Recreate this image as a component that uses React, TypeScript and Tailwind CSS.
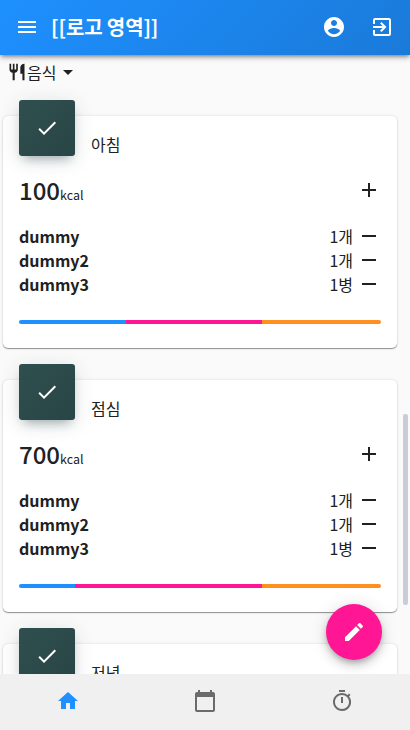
import React from "react";

const paths = {
  menu: "M3 18h18v-2H3v2zm0-5h18v-2H3v2zm0-7v2h18V6H3z",
  account:
    "M12 2C6.48 2 2 6.48 2 12s4.48 10 10 10 10-4.48 10-10S17.52 2 12 2zm0 3c1.66 0 3 1.34 3 3s-1.34 3-3 3-3-1.34-3-3 1.34-3 3-3zm0 14.2c-2.5 0-4.71-1.28-6-3.22.03-1.99 4-3.08 6-3.08 1.99 0 5.97 1.09 6 3.08-1.29 1.94-3.5 3.22-6 3.22z",
  exit: "M10.09 15.59L11.5 17l5-5-5-5-1.41 1.41L12.67 11H3v2h9.67l-2.58 2.59zM19 3H5c-1.11 0-2 .9-2 2v4h2V5h14v14H5v-4H3v4c0 1.1.89 2 2 2h14c1.1 0 2-.9 2-2V5c0-1.1-.9-2-2-2z",
  restaurant:
    "M11 9H9V2H7v7H5V2H3v7c0 2.12 1.66 3.84 3.75 3.97V22h2.5v-9.03C11.34 12.84 13 11.12 13 9V2h-2v7zm5-3v8h2.5v8H21V2c-2.76 0-5 2.24-5 4z",
  dropDown: "M7 10l5 5 5-5z",
  check: "M9 16.17L4.83 12l-1.42 1.41L9 19 21 7l-1.41-1.41z",
  add: "M19 13h-6v6h-2v-6H5v-2h6V5h2v6h6v2z",
  remove: "M19 13H5v-2h14v2z",
  home: "M10 20v-6h4v6h5v-8h3L12 3 2 12h3v8z",
  calendar:
    "M20 3h-1V1h-2v2H7V1H5v2H4c-1.1 0-2 .9-2 2v16c0 1.1.9 2 2 2h16c1.1 0 2-.9 2-2V5c0-1.1-.9-2-2-2zm0 18H4V8h16v13z",
  timer:
    "M15 1H9v2h6V1zm-4 13h2V8h-2v6zm8.03-6.61l1.42-1.42c-.43-.51-.9-.99-1.41-1.41l-1.42 1.42A8.962 8.962 0 0 0 12 4c-4.97 0-9 4.03-9 9s4.02 9 9 9a8.994 8.994 0 0 0 7.03-14.61zM12 20c-3.87 0-7-3.13-7-7s3.13-7 7-7 7 3.13 7 7-3.13 7-7 7z",
  edit: "M3 17.25V21h3.75L17.81 9.94l-3.75-3.75L3 17.25zM20.71 7.04c.39-.39.39-1.02 0-1.41l-2.34-2.34c-.39-.39-1.02-.39-1.41 0l-1.83 1.83 3.75 3.75 1.83-1.83z",
};

function Icon({ name, className = "size-6" }: { name: keyof typeof paths; className?: string }) {
  return (
    <svg viewBox="0 0 24 24" fill="currentColor" className={`shrink-0 ${className}`}>
      <path d={paths[name]} />
    </svg>
  );
}

interface Meal {
  title: string;
  kcal: number;
  parts: [number, number, number];
}

const meals: Meal[] = [
  { title: "아침", kcal: 100, parts: [107, 136, 119] },
  { title: "점심", kcal: 700, parts: [56, 187, 119] },
  { title: "저녁", kcal: 0, parts: [107, 136, 119] },
];

const foods = [
  { name: "dummy", amount: "1개" },
  { name: "dummy2", amount: "1개" },
  { name: "dummy3", amount: "1병" },
];

const partColors = ["bg-[#1e90ff]", "bg-[#ff1694]", "bg-[#ff9020]"];

function MealCard({ meal }: { meal: Meal }) {
  return (
    <section className="h-[232px] shrink-0 rounded-[5px] bg-white px-4 shadow-[0_1px_1px_rgba(0,0,0,0.4),0_0_3px_rgba(0,0,0,0.12)]">
      <div className="flex h-10">
        <div className="-mt-4 flex size-14 shrink-0 items-center justify-center rounded-[3px] bg-linear-[135deg,#2f4f4f,#294545] text-white shadow-[0_4px_20px_rgba(38,50,56,0.14),0_7px_10px_-5px_rgba(38,70,70,0.4)]">
          <Icon name="check" />
        </div>
        <h2 className="ml-4 mt-4 text-base leading-6 font-normal">{meal.title}</h2>
      </div>
      <div className="mt-[18px] flex h-8 items-center justify-between">
        <div className="flex items-baseline pt-[5px] leading-8">
          <span className="text-2xl leading-8 font-medium">{meal.kcal}</span>
          <span className="text-[12.5px]">kcal</span>
        </div>
        <Icon name="add" />
      </div>
      <ul className="mt-[18px]">
        {foods.map((food) => (
          <li key={food.name} className="flex h-6 items-center justify-between text-base leading-6">
            <span className="font-bold">{food.name}</span>
            <span className="flex items-center gap-1">
              {food.amount}
              <Icon name="remove" />
            </span>
          </li>
        ))}
      </ul>
      <div className="mt-6 flex h-1 overflow-hidden rounded-full">
        {meal.parts.map((part, i) => (
          <div key={i} className={partColors[i]} style={{ width: part }} />
        ))}
      </div>
    </section>
  );
}

export default function App() {
  return (
    <div className="relative flex h-[730px] w-[410px] flex-col overflow-hidden bg-[#fafafa] font-['Noto_Sans_CJK_KR',sans-serif] text-[#212121]">
      <header className="z-10 flex h-[55px] shrink-0 items-center bg-linear-[135deg,#1e90ff,#1a7ad9] px-4 pb-px text-white shadow-[0_2px_4px_-1px_rgba(0,0,0,0.4),0_3px_6px_rgba(0,0,0,0.2)]">
        <Icon name="menu" className="-ml-px size-6" />
        <h1 className="ml-3 flex-1 text-xl leading-8 font-bold tracking-[-0.12px]">[[로고 영역]]</h1>
        <Icon name="account" />
        <Icon name="exit" className="ml-6 size-6" />
      </header>

      <main className="min-h-0 flex-1 overflow-hidden pl-[3px] pr-[13px]">
        <button className="ml-1 flex h-[34px] items-center text-base leading-6">
          <Icon name="restaurant" className="size-5" />
          <span>음식</span>
          <Icon name="dropDown" />
        </button>
        <div className="mt-[27px] flex flex-col gap-8">
          {meals.map((meal) => (
            <MealCard key={meal.title} meal={meal} />
          ))}
        </div>
      </main>

      <nav className="z-10 grid h-14 shrink-0 grid-cols-3 place-items-center bg-[#f0f0f0] pb-0.5 text-[#6b6b6b]">
        <Icon name="home" className="size-6 text-[#1e90ff]" />
        <Icon name="calendar" />
        <Icon name="timer" />
      </nav>

      <button className="absolute right-7 bottom-[70px] z-20 flex size-14 items-center justify-center rounded-full bg-[#ff1694] text-white shadow-[0_3px_5px_-1px_rgba(0,0,0,0.2),0_6px_10px_rgba(0,0,0,0.14),0_1px_18px_rgba(0,0,0,0.12)]">
        <Icon name="edit" />
      </button>
      <div className="absolute top-[414px] right-[2px] h-[191px] w-[5px] rounded-xs bg-[#c9ced6]" />
    </div>
  );
}
